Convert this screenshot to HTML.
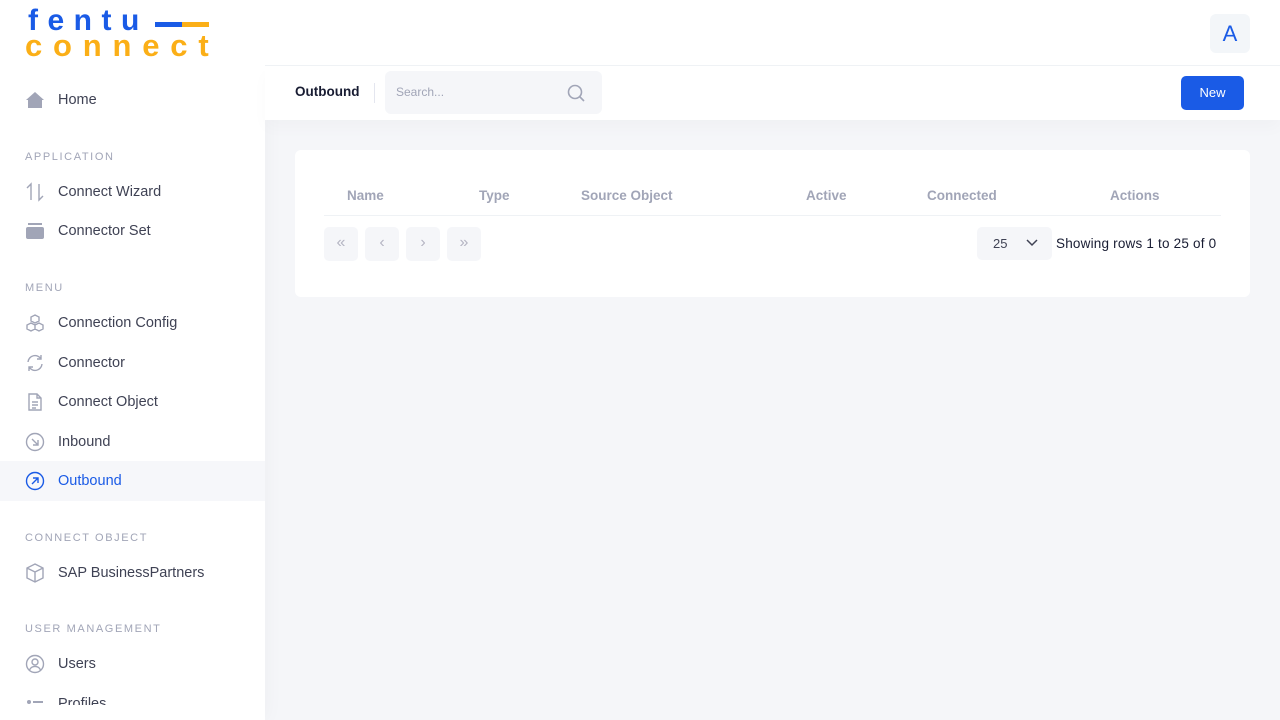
<!DOCTYPE html>
<html><head><meta charset="utf-8"><style>
*{box-sizing:border-box;margin:0;padding:0}
body{width:1280px;height:720px;overflow:hidden;font-family:"Liberation Sans",sans-serif;background:#f5f6f9;position:relative;color:#3f4254}
.side{position:absolute;left:0;top:0;width:265px;height:720px;background:#fff;box-shadow:0 0 20px rgba(0,0,0,.04)}
.clip{position:absolute;left:0;top:0;width:265px;height:705px;overflow:hidden}
.logo1{position:absolute;left:28px;top:4px;font-size:30px;font-weight:bold;color:#1a5be6;letter-spacing:9.5px}
.logo2{position:absolute;left:25px;top:28px;font-size:31px;font-weight:bold;color:#fbaf17;letter-spacing:10.8px}
.bar1{position:absolute;left:155px;top:22px;width:27px;height:5px;background:#1a5be6}
.bar2{position:absolute;left:182px;top:22px;width:27px;height:5px;background:#fbaf17}
.item{position:absolute;left:0;width:265px;height:40px;display:flex;align-items:center;padding-left:25px;font-size:14.5px;color:#3f4254}
.item svg{width:20px;height:20px;margin-right:13px;fill:none;stroke:#a1a5b7;stroke-width:1.4;flex:none}
.item.act{background:#f6f7fa;color:#1a5be6}
.item.act svg{stroke:#1a5be6}
.sec{position:absolute;left:25px;font-size:11px;letter-spacing:1.6px;color:#a1a5b7}
.top{position:absolute;left:265px;top:0;right:0;height:66px;background:#fff;border-bottom:1px solid #eff2f5}
.avatar{position:absolute;right:30px;top:14px;width:40px;height:39px;background:#f3f6f9;border-radius:6px;color:#1a5be6;font-size:22px;text-align:center;line-height:39px}
.tool{position:absolute;left:265px;top:66px;right:0;height:54px;background:#fff;box-shadow:0 8px 15px rgba(0,0,0,.025)}
.card{position:absolute;left:295px;top:150px;width:955px;height:147px;background:#fff;border-radius:6px}
.th{position:absolute;top:188px;font-size:13.5px;font-weight:bold;color:#a1a5b7}
.pb{position:absolute;top:227px;width:34px;height:34px;background:#f5f6f9;border-radius:5px;color:#b5b5c3;text-align:center;line-height:32px;font-size:16px}
</style></head><body>
<div class="side"><div class="clip">
<div class="logo1">fentu</div><div class="bar1"></div><div class="bar2"></div>
<div class="logo2">connect</div>
<div class="item" style="top:80px"><svg viewBox="0 0 20 20" style="fill:#a1a5b7;stroke:none"><path d="M10 2L1 10h2v8h14v-8h2z"/></svg>Home</div>
<div class="sec" style="top:151px">APPLICATION</div>
<div class="item" style="top:172px"><svg viewBox="0 0 20 20"><path d="M6 18V2L2 6M14 2v16l4-4"/></svg>Connect Wizard</div>
<div class="item" style="top:211px"><svg viewBox="0 0 20 20" style="fill:#a1a5b7;stroke:none"><rect x="1" y="6" width="18" height="12" rx="2"/><rect x="3" y="2" width="14" height="2"/></svg>Connector Set</div>
<div class="sec" style="top:282px">MENU</div>
<div class="item" style="top:303px"><svg viewBox="0 0 20 20"><path d="M10 2l4 2v4l-4 2-4-2V4zM6 10l4 2v4l-4 2-4-2v-4zM14 10l4 2v4l-4 2-4-2v-4z"/></svg>Connection Config</div>
<div class="item" style="top:343px"><svg viewBox="0 0 20 20"><path d="M3 9a7 7 0 0 1 13-3M17 11a7 7 0 0 1-13 3M16 2v4h-4M4 18v-4h4"/></svg>Connector</div>
<div class="item" style="top:382px"><svg viewBox="0 0 20 20"><path d="M4 2h8l4 4v12H4zM12 2v4h4M7 10h6M7 13h6M7 16h4"/></svg>Connect Object</div>
<div class="item" style="top:422px"><svg viewBox="0 0 20 20"><circle cx="10" cy="10" r="8.5"/><path d="M7 7l6 6M13 8v5H8"/></svg>Inbound</div>
<div class="item act" style="top:461px"><svg viewBox="0 0 20 20"><circle cx="10" cy="10" r="8.5"/><path d="M7 13l6-6M8 7h5v5"/></svg>Outbound</div>
<div class="sec" style="top:532px">CONNECT OBJECT</div>
<div class="item" style="top:553px"><svg viewBox="0 0 20 20"><path d="M10 1l8 4v10l-8 4-8-4V5zM2 5l8 4 8-4M10 9v10"/></svg>SAP BusinessPartners</div>
<div class="sec" style="top:623px">USER MANAGEMENT</div>
<div class="item" style="top:644px"><svg viewBox="0 0 20 20"><circle cx="10" cy="10" r="8.5"/><circle cx="10" cy="8" r="3"/><path d="M4.5 16a6 6 0 0 1 11 0"/></svg>Users</div>
<div class="item" style="top:684px"><svg viewBox="0 0 20 20" style="fill:#a1a5b7;stroke:none"><circle cx="4" cy="8" r="2"/><rect x="8" y="7" width="10" height="2"/><circle cx="4" cy="14" r="2"/><rect x="8" y="13" width="10" height="2"/></svg>Profiles</div>
</div></div>
<div class="top"><div class="avatar">A</div></div>
<div class="tool">
<div style="position:absolute;left:30px;top:18px;font-size:13.5px;font-weight:bold;color:#181c32">Outbound</div>
<div style="position:absolute;left:109px;top:17px;width:1px;height:20px;background:#e4e6ef"></div>
<div style="position:absolute;left:120px;top:5px;width:217px;height:43px;background:#f5f6f9;border-radius:6px"><span style="position:absolute;left:11px;top:14px;font-size:12px;color:#a1a5b7">Search...</span>
<svg style="position:absolute;left:181px;top:12px" width="20" height="20" viewBox="0 0 20 20" fill="none" stroke="#a1a5b7" stroke-width="1.6"><circle cx="9" cy="9" r="6.5"/><path d="M14 14l4 4"/></svg></div>
<div style="position:absolute;right:36px;top:10px;width:63px;height:34px;background:#1a5be6;border-radius:5px;color:#fff;font-size:13px;text-align:center;line-height:34px">New</div>
</div>
<div class="card"></div>
<div class="th" style="left:347px">Name</div>
<div class="th" style="left:479px">Type</div>
<div class="th" style="left:581px">Source Object</div>
<div class="th" style="left:806px">Active</div>
<div class="th" style="left:927px">Connected</div>
<div class="th" style="left:1110px">Actions</div>
<div style="position:absolute;left:324px;top:215px;width:897px;height:1px;background:#eff2f5"></div>
<div class="pb" style="left:324px">«</div>
<div class="pb" style="left:365px">‹</div>
<div class="pb" style="left:406px">›</div>
<div class="pb" style="left:447px">»</div>
<div style="position:absolute;left:977px;top:227px;width:75px;height:33px;background:#f5f6f9;border-radius:5px;font-size:13px;color:#3f4254;padding:9px 0 0 16px">25<svg style="position:absolute;right:14px;top:12px" width="12" height="8" viewBox="0 0 12 8" fill="none" stroke="#3f4254" stroke-width="1.5"><path d="M1 1l5 5 5-5"/></svg></div>
<div style="position:absolute;left:1056px;top:236px;font-size:13.5px;letter-spacing:.2px;color:#181c32">Showing rows 1 to 25 of 0</div>
</body></html>
